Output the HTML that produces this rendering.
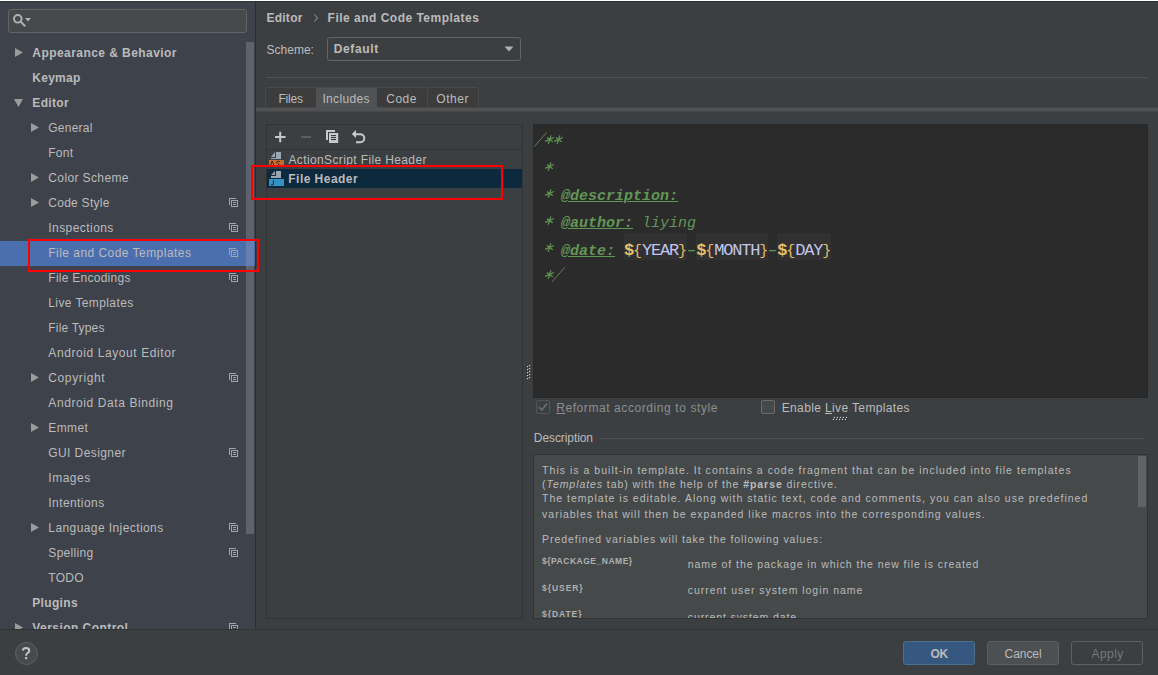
<!DOCTYPE html>
<html><head><meta charset="utf-8">
<style>
*{margin:0;padding:0;box-sizing:border-box;}
html,body{width:1158px;height:675px;overflow:hidden;background:#3C3F41;}
body{position:relative;font-family:"Liberation Sans",sans-serif;font-size:12px;color:#BBBBBB;}
.a{position:absolute;}
.t{position:absolute;white-space:nowrap;}
u{text-decoration:underline;text-underline-offset:1px;}
</style></head>
<body>
<div class="a" style="left:0;top:0;width:1158px;height:1px;background:#FFFFFF"></div>
<div class="a" style="left:0;top:1px;width:255px;height:1px;background:#30333A"></div>
<div class="a" style="left:255px;top:1px;width:903px;height:1px;background:#2D3031"></div>

<!-- LEFT PANEL -->
<div class="a" style="left:0;top:2px;width:255px;height:627px;background:#3E424B;overflow:hidden">
<div class="a" style="left:0;top:-2px;width:255px;height:629px">
 <div class="a" style="left:8px;top:9px;width:239px;height:24px;border:1px solid #646464;border-radius:3px;background:#45494A"></div>
 <svg class="a" style="left:0;top:0" width="40" height="40" viewBox="0 0 40 40">
  <circle cx="17.8" cy="18.8" r="3.8" fill="none" stroke="#AFB1B3" stroke-width="2"/>
  <line x1="20.6" y1="21.6" x2="25.2" y2="26.2" stroke="#AFB1B3" stroke-width="2"/>
  <polygon points="25,18 31,18 28,21.5" fill="#AFB1B3"/>
 </svg>
<svg class="a" style="left:15px;top:48px" width="9" height="10" viewBox="0 0 9 10"><polygon points="0,0 8,4.5 0,9" fill="#9C9C9C"/></svg>
<svg class="a" style="left:14px;top:99px" width="10" height="9" viewBox="0 0 10 9"><polygon points="0,0 9,0 4.5,8" fill="#9C9C9C"/></svg>
<svg class="a" style="left:31px;top:123px" width="9" height="10" viewBox="0 0 9 10"><polygon points="0,0 8,4.5 0,9" fill="#9C9C9C"/></svg>
<svg class="a" style="left:31px;top:173px" width="9" height="10" viewBox="0 0 9 10"><polygon points="0,0 8,4.5 0,9" fill="#9C9C9C"/></svg>
<svg class="a" style="left:31px;top:198px" width="9" height="10" viewBox="0 0 9 10"><polygon points="0,0 8,4.5 0,9" fill="#9C9C9C"/></svg>
<svg class="a" style="left:229px;top:198px" width="10" height="10" viewBox="0 0 10 10"><rect x="0.5" y="0.5" width="6" height="6" fill="none" stroke="#9AA7B0"/><rect x="1" y="1" width="9" height="9" fill="#3E424B"/><rect x="2.5" y="2.5" width="6" height="6" fill="none" stroke="#9AA7B0"/><rect x="4" y="4" width="3" height="1" fill="#9AA7B0"/><rect x="4" y="6" width="3" height="1" fill="#9AA7B0"/></svg>
<svg class="a" style="left:229px;top:223px" width="10" height="10" viewBox="0 0 10 10"><rect x="0.5" y="0.5" width="6" height="6" fill="none" stroke="#9AA7B0"/><rect x="1" y="1" width="9" height="9" fill="#3E424B"/><rect x="2.5" y="2.5" width="6" height="6" fill="none" stroke="#9AA7B0"/><rect x="4" y="4" width="3" height="1" fill="#9AA7B0"/><rect x="4" y="6" width="3" height="1" fill="#9AA7B0"/></svg>
<div class="a" style="left:0;top:241px;width:255px;height:25px;background:#4B6EAF"></div>
<svg class="a" style="left:229px;top:248px" width="10" height="10" viewBox="0 0 10 10"><rect x="0.5" y="0.5" width="6" height="6" fill="none" stroke="#9AA7B0"/><rect x="1" y="1" width="9" height="9" fill="#4B6EAF"/><rect x="2.5" y="2.5" width="6" height="6" fill="none" stroke="#9AA7B0"/><rect x="4" y="4" width="3" height="1" fill="#9AA7B0"/><rect x="4" y="6" width="3" height="1" fill="#9AA7B0"/></svg>
<svg class="a" style="left:229px;top:273px" width="10" height="10" viewBox="0 0 10 10"><rect x="0.5" y="0.5" width="6" height="6" fill="none" stroke="#9AA7B0"/><rect x="1" y="1" width="9" height="9" fill="#3E424B"/><rect x="2.5" y="2.5" width="6" height="6" fill="none" stroke="#9AA7B0"/><rect x="4" y="4" width="3" height="1" fill="#9AA7B0"/><rect x="4" y="6" width="3" height="1" fill="#9AA7B0"/></svg>
<svg class="a" style="left:31px;top:373px" width="9" height="10" viewBox="0 0 9 10"><polygon points="0,0 8,4.5 0,9" fill="#9C9C9C"/></svg>
<svg class="a" style="left:229px;top:373px" width="10" height="10" viewBox="0 0 10 10"><rect x="0.5" y="0.5" width="6" height="6" fill="none" stroke="#9AA7B0"/><rect x="1" y="1" width="9" height="9" fill="#3E424B"/><rect x="2.5" y="2.5" width="6" height="6" fill="none" stroke="#9AA7B0"/><rect x="4" y="4" width="3" height="1" fill="#9AA7B0"/><rect x="4" y="6" width="3" height="1" fill="#9AA7B0"/></svg>
<svg class="a" style="left:31px;top:423px" width="9" height="10" viewBox="0 0 9 10"><polygon points="0,0 8,4.5 0,9" fill="#9C9C9C"/></svg>
<svg class="a" style="left:229px;top:448px" width="10" height="10" viewBox="0 0 10 10"><rect x="0.5" y="0.5" width="6" height="6" fill="none" stroke="#9AA7B0"/><rect x="1" y="1" width="9" height="9" fill="#3E424B"/><rect x="2.5" y="2.5" width="6" height="6" fill="none" stroke="#9AA7B0"/><rect x="4" y="4" width="3" height="1" fill="#9AA7B0"/><rect x="4" y="6" width="3" height="1" fill="#9AA7B0"/></svg>
<svg class="a" style="left:31px;top:523px" width="9" height="10" viewBox="0 0 9 10"><polygon points="0,0 8,4.5 0,9" fill="#9C9C9C"/></svg>
<svg class="a" style="left:229px;top:523px" width="10" height="10" viewBox="0 0 10 10"><rect x="0.5" y="0.5" width="6" height="6" fill="none" stroke="#9AA7B0"/><rect x="1" y="1" width="9" height="9" fill="#3E424B"/><rect x="2.5" y="2.5" width="6" height="6" fill="none" stroke="#9AA7B0"/><rect x="4" y="4" width="3" height="1" fill="#9AA7B0"/><rect x="4" y="6" width="3" height="1" fill="#9AA7B0"/></svg>
<svg class="a" style="left:229px;top:548px" width="10" height="10" viewBox="0 0 10 10"><rect x="0.5" y="0.5" width="6" height="6" fill="none" stroke="#9AA7B0"/><rect x="1" y="1" width="9" height="9" fill="#3E424B"/><rect x="2.5" y="2.5" width="6" height="6" fill="none" stroke="#9AA7B0"/><rect x="4" y="4" width="3" height="1" fill="#9AA7B0"/><rect x="4" y="6" width="3" height="1" fill="#9AA7B0"/></svg>
<svg class="a" style="left:15px;top:623px" width="9" height="10" viewBox="0 0 9 10"><polygon points="0,0 8,4.5 0,9" fill="#9C9C9C"/></svg>
<svg class="a" style="left:229px;top:623px" width="10" height="10" viewBox="0 0 10 10"><rect x="0.5" y="0.5" width="6" height="6" fill="none" stroke="#9AA7B0"/><rect x="1" y="1" width="9" height="9" fill="#3E424B"/><rect x="2.5" y="2.5" width="6" height="6" fill="none" stroke="#9AA7B0"/><rect x="4" y="4" width="3" height="1" fill="#9AA7B0"/><rect x="4" y="6" width="3" height="1" fill="#9AA7B0"/></svg>
<div class="t" style="left:32.30px;top:47.04px;font-size:12px;line-height:12px;font-weight:bold;letter-spacing:0.439px;">Appearance &amp; Behavior</div>
<div class="t" style="left:32.30px;top:72.04px;font-size:12px;line-height:12px;font-weight:bold;letter-spacing:0.269px;">Keymap</div>
<div class="t" style="left:32.30px;top:97.04px;font-size:12px;line-height:12px;font-weight:bold;letter-spacing:0.338px;">Editor</div>
<div class="t" style="left:48.30px;top:122.04px;font-size:12px;line-height:12px;letter-spacing:0.242px;">General</div>
<div class="t" style="left:48.30px;top:147.04px;font-size:12px;line-height:12px;letter-spacing:0.221px;">Font</div>
<div class="t" style="left:48.30px;top:172.04px;font-size:12px;line-height:12px;letter-spacing:0.381px;">Color Scheme</div>
<div class="t" style="left:48.30px;top:197.04px;font-size:12px;line-height:12px;letter-spacing:0.260px;">Code Style</div>
<div class="t" style="left:48.30px;top:222.04px;font-size:12px;line-height:12px;letter-spacing:0.436px;">Inspections</div>
<div class="t" style="left:48.30px;top:247.04px;font-size:12px;line-height:12px;letter-spacing:0.460px;">File and Code Templates</div>
<div class="t" style="left:48.30px;top:272.04px;font-size:12px;line-height:12px;letter-spacing:0.263px;">File Encodings</div>
<div class="t" style="left:48.30px;top:297.04px;font-size:12px;line-height:12px;letter-spacing:0.391px;">Live Templates</div>
<div class="t" style="left:48.30px;top:322.04px;font-size:12px;line-height:12px;letter-spacing:0.183px;">File Types</div>
<div class="t" style="left:48.30px;top:347.04px;font-size:12px;line-height:12px;letter-spacing:0.585px;">Android Layout Editor</div>
<div class="t" style="left:48.30px;top:372.04px;font-size:12px;line-height:12px;letter-spacing:0.616px;">Copyright</div>
<div class="t" style="left:48.30px;top:397.04px;font-size:12px;line-height:12px;letter-spacing:0.594px;">Android Data Binding</div>
<div class="t" style="left:48.30px;top:422.04px;font-size:12px;line-height:12px;letter-spacing:0.397px;">Emmet</div>
<div class="t" style="left:48.30px;top:447.04px;font-size:12px;line-height:12px;letter-spacing:0.408px;">GUI Designer</div>
<div class="t" style="left:48.30px;top:472.04px;font-size:12px;line-height:12px;letter-spacing:0.507px;">Images</div>
<div class="t" style="left:48.30px;top:497.04px;font-size:12px;line-height:12px;letter-spacing:0.425px;">Intentions</div>
<div class="t" style="left:48.30px;top:522.04px;font-size:12px;line-height:12px;letter-spacing:0.415px;">Language Injections</div>
<div class="t" style="left:48.30px;top:547.04px;font-size:12px;line-height:12px;letter-spacing:0.325px;">Spelling</div>
<div class="t" style="left:48.30px;top:572.04px;font-size:12px;line-height:12px;letter-spacing:0.287px;">TODO</div>
<div class="t" style="left:32.30px;top:597.04px;font-size:12px;line-height:12px;font-weight:bold;letter-spacing:0.322px;">Plugins</div>
<div class="t" style="left:32.30px;top:622.04px;font-size:12px;line-height:12px;font-weight:bold;letter-spacing:0.444px;">Version Control</div>
 <div class="a" style="left:246px;top:42px;width:8px;height:492px;background:rgba(160,165,175,0.33)"></div>
</div>
</div>
<div class="a" style="left:255px;top:1px;width:1px;height:628px;background:#2C2D2E"></div>

<!-- RIGHT PANEL -->
<svg class="a" style="left:313px;top:13px" width="6" height="10" viewBox="0 0 6 10"><polyline points="1.5,1.5 4.5,5 1.5,8.5" fill="none" stroke="#9C9C9C" stroke-width="1"/></svg>
<div class="a" style="left:327px;top:37px;width:194px;height:24px;border:1px solid #646464;border-radius:3px"></div>
<svg class="a" style="left:504px;top:46px" width="10" height="7" viewBox="0 0 10 7"><polygon points="0.5,0.5 9.5,0.5 5,5.5" fill="#AFB1B3"/></svg>
<div class="a" style="left:266px;top:77px;width:882px;height:1px;background:#515151"></div>

<!-- tabs -->
<div class="a" style="left:256px;top:107px;width:902px;height:1px;background:#484646"></div>
<div class="a" style="left:256px;top:108px;width:902px;height:3px;background:#4E5254"></div>
<div class="a" style="left:256px;top:111px;width:902px;height:1px;background:#484646"></div>
<div class="a" style="left:265px;top:87px;width:52px;height:21px;border:1px solid #4A4848;border-radius:2px 2px 0 0;background:#3C3C3D"></div>
<div class="a" style="left:376px;top:87px;width:52px;height:21px;border:1px solid #4A4848;border-radius:2px 2px 0 0;background:#3C3C3D"></div>
<div class="a" style="left:427px;top:87px;width:52px;height:21px;border:1px solid #4A4848;border-radius:2px 2px 0 0;background:#3C3C3D"></div>
<div class="a" style="left:316px;top:87px;width:61px;height:21px;border-top:1px solid #4A4848;background:#4E5254"></div>

<!-- list panel -->
<div class="a" style="left:266px;top:124px;width:257px;height:495px;border:1px solid #313335;background:#3C3F41"></div>
<div class="a" style="left:267px;top:149px;width:255px;height:1px;background:#313335"></div>
<div class="a" style="left:267px;top:169px;width:255px;height:19px;background:#0D293E"></div>
<!-- toolbar icons -->
<svg class="a" style="left:266px;top:124px" width="110" height="26" viewBox="266 124 110 26">
 <rect x="275" y="136" width="10.5" height="2" fill="#C9C9C9"/>
 <rect x="279.2" y="131.8" width="2" height="10.5" fill="#C9C9C9"/>
 <rect x="301" y="136" width="10" height="2" fill="#5C5E60"/>
 <path d="M326,130 H335 V132 H328 V140 H326 Z" fill="#C9C9C9"/>
 <rect x="329" y="133" width="9.2" height="10" fill="#C9C9C9"/>
 <rect x="331" y="135" width="5" height="1.1" fill="#3C3F41"/>
 <rect x="331" y="137" width="5" height="1.1" fill="#3C3F41"/>
 <rect x="331" y="139" width="5" height="1.1" fill="#3C3F41"/>
 <polygon points="351.8,134.1 356,130 356,138" fill="#C9C9C9"/>
 <path d="M355.5,134.2 H360.3 A4,4 0 0 1 360.3,142.2 H356" fill="none" stroke="#C9C9C9" stroke-width="2"/>
</svg>
<!-- file icons -->
<svg class="a" style="left:267px;top:150px" width="20" height="40" viewBox="267 150 20 40">
 <polygon points="271,157 275,152 275,157" fill="#9AA7B0"/>
 <path d="M276,152 H281 V159 H271 V158 H276 Z" fill="#9AA7B0"/>
 <rect x="269" y="160" width="15" height="7" fill="#C96A2D"/>
 <path d="M270.2,166 L272.2,161 L274.2,166" fill="none" stroke="#3A2418" stroke-width="1"/><path d="M280,161.8 Q278.5,160.8 277,161.6 Q276,162.6 277.5,163.5 L279,164.5 Q280.2,165.6 279,166.3 Q277.5,166.8 276.2,166" fill="none" stroke="#3A2418" stroke-width="1"/>
 <polygon points="271,175 275,171 275,175" fill="#9AA7B0"/>
 <path d="M276,171 H281 V178 H271 V176 H276 Z" fill="#9AA7B0"/>
 <rect x="269" y="179" width="15" height="7" fill="#3592C4"/>
 <path d="M273.4,180.2 V183.6 Q273.4,184.9 272.2,184.9 H271" fill="none" stroke="#22313B" stroke-width="1.1"/>
</svg>
<!-- splitter dots -->
<svg class="a" style="left:0;top:0;overflow:visible" width="1" height="1">
<g fill="#1F2021"><circle cx="526.9" cy="365.9" r="0.9"/><circle cx="528.9" cy="364.9" r="0.9"/><circle cx="526.9" cy="368.9" r="0.9"/><circle cx="528.9" cy="367.9" r="0.9"/><circle cx="526.9" cy="371.9" r="0.9"/><circle cx="528.9" cy="370.9" r="0.9"/><circle cx="526.9" cy="374.9" r="0.9"/><circle cx="528.9" cy="373.9" r="0.9"/><circle cx="526.9" cy="377.9" r="0.9"/><circle cx="528.9" cy="376.9" r="0.9"/><circle cx="835.1" cy="418.1" r="0.9"/><circle cx="834.1" cy="420.1" r="0.9"/><circle cx="838.1" cy="418.1" r="0.9"/><circle cx="837.1" cy="420.1" r="0.9"/><circle cx="841.1" cy="418.1" r="0.9"/><circle cx="840.1" cy="420.1" r="0.9"/><circle cx="844.1" cy="418.1" r="0.9"/><circle cx="843.1" cy="420.1" r="0.9"/><circle cx="847.1" cy="418.1" r="0.9"/><circle cx="846.1" cy="420.1" r="0.9"/></g>
<g fill="#D6D6D6"><circle cx="527.5" cy="366.5" r="0.75"/><circle cx="529.5" cy="365.5" r="0.75"/><circle cx="527.5" cy="369.5" r="0.75"/><circle cx="529.5" cy="368.5" r="0.75"/><circle cx="527.5" cy="372.5" r="0.75"/><circle cx="529.5" cy="371.5" r="0.75"/><circle cx="527.5" cy="375.5" r="0.75"/><circle cx="529.5" cy="374.5" r="0.75"/><circle cx="527.5" cy="378.5" r="0.75"/><circle cx="529.5" cy="377.5" r="0.75"/><circle cx="834.5" cy="417.5" r="0.75"/><circle cx="833.5" cy="419.5" r="0.75"/><circle cx="837.5" cy="417.5" r="0.75"/><circle cx="836.5" cy="419.5" r="0.75"/><circle cx="840.5" cy="417.5" r="0.75"/><circle cx="839.5" cy="419.5" r="0.75"/><circle cx="843.5" cy="417.5" r="0.75"/><circle cx="842.5" cy="419.5" r="0.75"/><circle cx="846.5" cy="417.5" r="0.75"/><circle cx="845.5" cy="419.5" r="0.75"/></g>
</svg>


<!-- editor -->
<div class="a" style="left:533px;top:124px;width:615px;height:274px;background:#2B2B2B;overflow:hidden">
<style>.cl{position:absolute;white-space:pre;font-family:"Liberation Mono",monospace;font-size:15px;line-height:15px;font-style:italic;color:#629755;}.cl u{text-decoration:underline;text-underline-offset:1px;text-decoration-thickness:1px;}.cl .v{font-style:normal;font-weight:bold;color:#E8BF6A;font-size:17px;letter-spacing:-1.2px;}.cl .br{font-style:normal;color:#E8BF6A;}.cl .vn{font-style:normal;color:#C2C6EE;font-size:17px;letter-spacing:-1.2px;}.cl .dash{display:inline-block;transform:scaleX(1.6);}</style>
<div class="a" style="left:91px;top:109px;width:63px;height:27px;background:#313131"></div>
<div class="a" style="left:163px;top:109px;width:72px;height:27px;background:#313131"></div>
<div class="a" style="left:244px;top:109px;width:54px;height:27px;background:#313131"></div>
<div class="cl" style="left:1px;top:10.50px">   </div>
<div class="cl" style="left:1px;top:37.50px">  </div>
<div class="cl" style="left:1px;top:64.50px">   <b><u>@description:</u></b></div>
<div class="cl" style="left:1px;top:91.50px">   <b><u>@author:</u></b> liying</div>
<div class="cl" style="left:1px;top:118.50px">   <b><u>@date:</u></b> <span class="v">$</span><span class="br">{</span><span class="vn">YEAR</span><span class="br">}</span><span class="dash">-</span><span class="v">$</span><span class="br">{</span><span class="vn">MONTH</span><span class="br">}</span><span class="dash">-</span><span class="v">$</span><span class="br">{</span><span class="vn">DAY</span><span class="br">}</span></div>
<div class="cl" style="left:1px;top:145.50px">   </div>
<svg class="a" style="left:0;top:0" width="615" height="274"><g stroke="#629755" stroke-width="1.25"><line x1="18.00" y1="11.40" x2="15.30" y2="19.70"/><line x1="21.00" y1="13.50" x2="12.20" y2="17.40"/><line x1="19.80" y1="17.70" x2="14.00" y2="13.50"/><line x1="26.90" y1="11.40" x2="24.20" y2="19.70"/><line x1="29.90" y1="13.50" x2="21.10" y2="17.40"/><line x1="28.70" y1="17.70" x2="22.90" y2="13.50"/><line x1="17.90" y1="38.40" x2="15.20" y2="46.70"/><line x1="20.90" y1="40.50" x2="12.10" y2="44.40"/><line x1="19.70" y1="44.70" x2="13.90" y2="40.50"/><line x1="17.90" y1="65.40" x2="15.20" y2="73.70"/><line x1="20.90" y1="67.50" x2="12.10" y2="71.40"/><line x1="19.70" y1="71.70" x2="13.90" y2="67.50"/><line x1="17.90" y1="92.40" x2="15.20" y2="100.70"/><line x1="20.90" y1="94.50" x2="12.10" y2="98.40"/><line x1="19.70" y1="98.70" x2="13.90" y2="94.50"/><line x1="17.90" y1="119.40" x2="15.20" y2="127.70"/><line x1="20.90" y1="121.50" x2="12.10" y2="125.40"/><line x1="19.70" y1="125.70" x2="13.90" y2="121.50"/><line x1="17.90" y1="146.40" x2="15.20" y2="154.70"/><line x1="20.90" y1="148.50" x2="12.10" y2="152.40"/><line x1="19.70" y1="152.70" x2="13.90" y2="148.50"/><line x1="1.3999999999999773" y1="22.599999999999994" x2="13.700000000000045" y2="8.300000000000011" stroke-width="0.85"/><line x1="19.299999999999955" y1="157.7" x2="31.700000000000045" y2="143.3" stroke-width="0.85"/></g></svg>
</div>
<div class="a" style="left:533px;top:124px;width:615px;height:274px;border:1px solid #272727"></div>

<!-- checkboxes -->
<div class="a" style="left:536px;top:400px;width:14px;height:14px;border:1px solid #535556;border-radius:2px"></div>
<svg class="a" style="left:536px;top:400px" width="14" height="14" viewBox="0 0 14 14"><polyline points="3,7 5.8,10 11,3.5" fill="none" stroke="#6E6E6E" stroke-width="1.6"/></svg>
<div class="a" style="left:761px;top:400px;width:14px;height:14px;border:1px solid #6B6B6B;border-radius:2px;background:#43494A"></div>

<!-- description -->
<div class="a" style="left:599px;top:438px;width:546px;height:1px;background:#515151"></div>
<div class="a" style="left:533px;top:454px;width:615px;height:165px;border:1px solid #2F3133;background:#45494A;overflow:hidden">
<div class="a" style="left:-534px;top:-455px;width:1158px;height:675px">
<div class="t" style="left:542.10px;top:464.81px;font-size:10.5px;line-height:10.5px;letter-spacing:1.025px;">This is a built-in template. It contains a code fragment that can be included into file templates</div>
<div class="t" style="left:542.10px;top:479.01px;font-size:10.5px;line-height:10.5px;letter-spacing:0.934px;">(<i>Templates</i> tab) with the help of the <b>#parse</b> directive.</div>
<div class="t" style="left:542.10px;top:492.71px;font-size:10.5px;line-height:10.5px;letter-spacing:1.002px;">The template is editable. Along with static text, code and comments, you can also use predefined</div>
<div class="t" style="left:542.10px;top:509.11px;font-size:10.5px;line-height:10.5px;letter-spacing:0.983px;">variables that will then be expanded like macros into the corresponding values.</div>
<div class="t" style="left:542.10px;top:533.71px;font-size:10.5px;line-height:10.5px;letter-spacing:0.914px;">Predefined variables will take the following values:</div>
<div class="t" style="left:542.00px;top:557.30px;font-size:8.5px;line-height:8.5px;font-weight:bold;color:#B0B0B0;letter-spacing:0.514px;">${PACKAGE_NAME}</div>
<div class="t" style="left:687.80px;top:558.51px;font-size:10.5px;line-height:10.5px;letter-spacing:0.925px;">name of the package in which the new file is created</div>
<div class="t" style="left:542.00px;top:583.80px;font-size:8.5px;line-height:8.5px;font-weight:bold;color:#B0B0B0;letter-spacing:0.947px;">${USER}</div>
<div class="t" style="left:687.80px;top:585.11px;font-size:10.5px;line-height:10.5px;letter-spacing:0.967px;">current user system login name</div>
<div class="t" style="left:542.00px;top:610.00px;font-size:8.5px;line-height:8.5px;font-weight:bold;color:#B0B0B0;letter-spacing:0.949px;">${DATE}</div>
<div class="t" style="left:687.80px;top:611.61px;font-size:10.5px;line-height:10.5px;letter-spacing:0.895px;">current system date</div>
</div>
<div class="a" style="left:604px;top:1px;width:8px;height:51px;background:#5F6364"></div>
</div>

<!-- BOTTOM -->
<div class="a" style="left:0;top:629px;width:1158px;height:1px;background:#313335"></div>
<div class="a" style="left:15px;top:642px;width:23px;height:23px;border-radius:50%;border:1px solid #5F6162;background:#474A4C"></div>
<div class="a" style="left:903px;top:641px;width:72px;height:24px;border-radius:3px;border:1px solid #4C708C;background:#365880"></div>
<div class="a" style="left:987px;top:641px;width:72px;height:24px;border-radius:3px;border:1px solid #5E6060;background:#4C5052"></div>
<div class="a" style="left:1071px;top:641px;width:72px;height:24px;border-radius:3px;border:1px solid #5E6060"></div>
<div class="t" style="left:266.40px;top:11.74px;font-size:12px;line-height:12px;font-weight:bold;letter-spacing:0.271px;">Editor</div>
<div class="t" style="left:327.60px;top:11.74px;font-size:12px;line-height:12px;font-weight:bold;letter-spacing:0.488px;">File and Code Templates</div>
<div class="t" style="left:266.40px;top:43.84px;font-size:12px;line-height:12px;letter-spacing:0.034px;">Scheme:</div>
<div class="t" style="left:333.80px;top:42.64px;font-size:12px;line-height:12px;font-weight:bold;letter-spacing:0.618px;">Default</div>
<div class="t" style="left:278.40px;top:92.74px;font-size:12px;line-height:12px;letter-spacing:-0.209px;">Files</div>
<div class="t" style="left:322.40px;top:92.74px;font-size:12px;line-height:12px;letter-spacing:0.350px;">Includes</div>
<div class="t" style="left:386.20px;top:92.74px;font-size:12px;line-height:12px;letter-spacing:0.528px;">Code</div>
<div class="t" style="left:436.30px;top:92.74px;font-size:12px;line-height:12px;letter-spacing:0.517px;">Other</div>
<div class="t" style="left:288.50px;top:153.94px;font-size:12px;line-height:12px;letter-spacing:0.371px;">ActionScript File Header</div>
<div class="t" style="left:288.30px;top:173.04px;font-size:12px;line-height:12px;font-weight:bold;letter-spacing:0.463px;">File Header</div>
<div class="t" style="left:556.20px;top:402.14px;font-size:12px;line-height:12px;color:#8E8E8E;letter-spacing:0.582px;"><u>R</u>eformat according to style</div>
<div class="t" style="left:781.70px;top:402.24px;font-size:12px;line-height:12px;letter-spacing:0.369px;">Enable <u>L</u>ive Templates</div>
<div class="t" style="left:533.80px;top:431.64px;font-size:12px;line-height:12px;letter-spacing:-0.085px;">Description</div>
<div class="t" style="left:930.40px;top:647.84px;font-size:12px;line-height:12px;font-weight:bold;letter-spacing:-0.200px;">OK</div>
<div class="t" style="left:1004.60px;top:647.84px;font-size:12px;line-height:12px;letter-spacing:-0.077px;">Cancel</div>
<div class="t" style="left:1091.50px;top:647.84px;font-size:12px;line-height:12px;color:#777777;letter-spacing:0.454px;">Apply</div>
<svg class="a" style="left:0;top:630px" width="45" height="45" viewBox="0 630 45 45"><path d="M22.9,650.6 Q22.9,647.9 26.1,647.9 Q29.3,647.9 29.3,650.5 Q29.3,652.1 27.6,653 Q26.1,653.9 26.1,655.8" fill="none" stroke="#C4C4C4" stroke-width="2"/><rect x="25.1" y="657" width="2.1" height="2.2" fill="#C4C4C4"/></svg>
<!-- REDRECTS -->
<div class="a" style="left:28px;top:239px;width:231px;height:33px;border:2px solid #FF0000"></div>
<div class="a" style="left:251px;top:165px;width:252px;height:35px;border:2px solid #FF0000"></div>
</body></html>
